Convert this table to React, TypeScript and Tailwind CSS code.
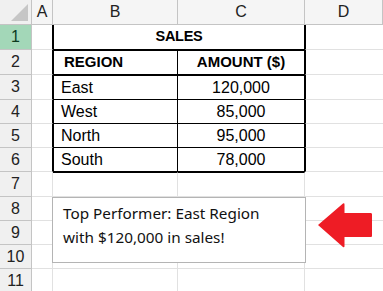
import React from "react";

const data: { b: string; c: string; bold?: boolean }[] = [
  { b: "", c: "" },
  { b: "REGION", c: "AMOUNT ($)", bold: true },
  { b: "East", c: "120,000" },
  { b: "West", c: "85,000" },
  { b: "North", c: "95,000" },
  { b: "South", c: "78,000" },
];

const rows = [1, 2, 3, 4, 5, 6, 7, 8, 9, 10, 11];
const grid = "border-[#e1e1e1]";

export default function App() {
  return (
    <div className="relative w-[383px] h-[291px] overflow-hidden bg-white text-black font-['Liberation_Sans',Arial,sans-serif]">
      <div className="grid grid-cols-[32px_21px_125px_127px_78px] grid-rows-[25px_25px_25px_25px_24px_24px_24px_25px_24px_24px_24px_24px]">
        <div className="bg-[#f0f0f0] border-r border-b border-[#c4c4c4] flex items-end justify-end pr-[3px] pb-[3px]">
          <svg width="17" height="17" viewBox="0 0 17 17">
            <polygon points="17,0 17,17 0,17" fill="#c6c6c6" />
          </svg>
        </div>
        {["A", "B", "C", "D"].map((l) => (
          <div
            key={l}
            className="bg-[#f5f5f5] border-r border-b border-[#c4c4c4] flex items-center justify-center text-[16px] text-[#222]"
          >
            {l}
          </div>
        ))}
        {rows.map((r) => {
          const inTable = r <= 6;
          const d = data[r - 1];
          const topBlack = r === 2 || r === 3 || r === 7;
          const rowHdr = (
            <div
              key={`h${r}`}
              className={`border-r border-b border-[#c4c4c4] flex items-center justify-center text-[16px] ${
                r === 1 ? "bg-[#a3d7b8] text-[#0c3a1f]" : "bg-[#f0f0f0] text-[#222]"
              }`}
            >
              {r}
            </div>
          );
          const aCell = <div key={`a${r}`} className={`border-r border-b ${grid} ${inTable ? "border-r-black" : ""}`} />;
          let bc: React.ReactNode;
          if (r === 1) {
            bc = (
              <div
                key="bc1"
                className="col-span-2 border-l border-r border-b border-black flex items-center justify-center font-bold text-[14.5px] tracking-[-0.3px]"
              >
                SALES
              </div>
            );
          } else {
            const edge = inTable
              ? `border-b border-black ${topBlack ? "border-t" : ""}`
              : `border-b ${grid} ${topBlack ? "border-t border-t-black" : ""}`;
            bc = (
              <React.Fragment key={`bc${r}`}>
                <div
                  className={`${edge} border-r ${inTable ? "border-l border-r-black" : grid} flex items-center ${
                    d?.bold ? "font-bold text-[15px] pl-[10px]" : "text-[16px] pl-[7px]"
                  }`}
                >
                  {d?.b}
                </div>
                <div
                  className={`${edge} border-r ${inTable ? "border-r-black" : grid} flex items-center justify-center ${
                    d?.bold ? "font-bold text-[15px]" : "text-[16px]"
                  }`}
                >
                  {d?.c}
                </div>
              </React.Fragment>
            );
          }
          const dCell = <div key={`d${r}`} className={`border-b ${grid} ${inTable ? "border-l border-l-black" : ""}`} />;
          return (
            <React.Fragment key={r}>
              {rowHdr}
              {aCell}
              {bc}
              {dCell}
            </React.Fragment>
          );
        })}
      </div>

      <div className="absolute left-[52px] top-[197px] w-[254px] h-[66px] bg-white border border-[#b4b4b4] pl-[10px] pt-[3px] text-[15.3px] leading-[24px] text-[#111] font-['Noto_Sans','Liberation_Sans',sans-serif]">
        <div>Top Performer: East Region</div>
        <div>with $120,000 in sales!</div>
      </div>

      <svg className="absolute left-[317px] top-[202px]" width="57" height="47" viewBox="0 0 57 47">
        <path
          d="M1 23 L26 1.5 Q27.5 0.5 27.5 2.5 L27.5 11 L54 11 Q55 11 55 12.5 L55 34 Q55 35 54 35 L27.5 35 L27.5 44 Q27.5 46 26 45 Z"
          fill="#ee1c25"
        />
      </svg>
    </div>
  );
}
